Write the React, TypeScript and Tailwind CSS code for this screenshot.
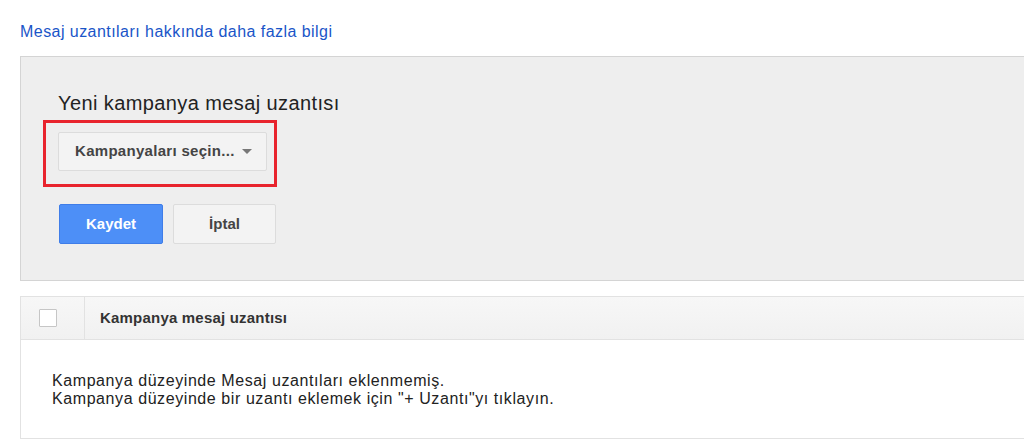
import React from 'react';

// Google Ads style "message extension" panel
const App: React.FC = () => {
	return (
		<div
			className="w-[1024px] h-[444px] overflow-hidden bg-white text-[#222]"
			style={{ fontFamily: '"Liberation Sans", Arial, sans-serif' }}
		>
			<div className="pl-[20px] pt-[22px]">
				<a className="block text-[16px] leading-[20px] tracking-[0.45px] text-[#1a55c8] cursor-pointer">
					Mesaj uzantıları hakkında daha fazla bilgi
				</a>
			</div>

			{/* New extension panel */}
			<div className="mt-[14px] ml-[20px] w-[1010px] h-[225px] bg-[#eeeeee] border border-r-0 border-[#d4d4d4] pl-[22px] pt-[34px]">
				<div className="ml-[15px] text-[20px] leading-[25px] tracking-[0.4px] text-[#222]">
					Yeni kampanya mesaj uzantısı
				</div>
				<div className="mt-[4px] w-[234px] h-[67px] border-[3px] border-[#e8232d] pl-[12px] pt-[9px]">
					<button
						type="button"
						className="flex items-center w-[209px] h-[39px] bg-[#f3f3f3] border border-[#dcdcdc] rounded-[2px] pl-[16px] text-[15px] tracking-[0.3px] font-bold text-[#444]"
					>
						<span>Kampanyaları seçin...</span>
						<span className="ml-[7px] w-0 h-0 border-l-[5px] border-r-[5px] border-t-[5px] border-l-transparent border-r-transparent border-t-[#777]" />
					</button>
				</div>
				<div className="mt-[17px] ml-[16px] flex gap-[10px]">
					<button
						type="button"
						className="w-[104px] h-[40px] bg-[#4d8ff7] border border-[#3f7de8] rounded-[2px] text-white text-[15px] font-bold"
					>
						Kaydet
					</button>
					<button
						type="button"
						className="w-[103px] h-[40px] bg-[#f3f3f3] border border-[#dcdcdc] rounded-[2px] text-[#444] text-[15px] font-bold"
					>
						İptal
					</button>
				</div>
			</div>

			{/* Extensions table */}
			<div className="mt-[15px] ml-[20px] w-[1010px] border border-r-0 border-[#e2e2e2]">
				<div className="flex h-[43px] bg-gradient-to-b from-[#f7f7f7] to-[#f1f1f1] border-b border-[#e2e2e2]">
					<div className="w-[64px] flex items-center pl-[18px] border-r border-[#e2e2e2]">
						<div className="w-[18px] h-[18px] bg-white border border-[#c6c6c6] rounded-[1px]" />
					</div>
					<div className="flex items-center pl-[15px] text-[15px] tracking-[0.2px] font-bold text-[#333]">
						Kampanya mesaj uzantısı
					</div>
				</div>
				<div className="h-[98px] pl-[31px] pt-[32px] text-[16px] leading-[18px] tracking-[0.58px] text-[#222]">
					<div>Kampanya düzeyinde Mesaj uzantıları eklenmemiş.</div>
					<div>Kampanya düzeyinde bir uzantı eklemek için "+ Uzantı"yı tıklayın.</div>
				</div>
			</div>
		</div>
	);
};

export default App;
